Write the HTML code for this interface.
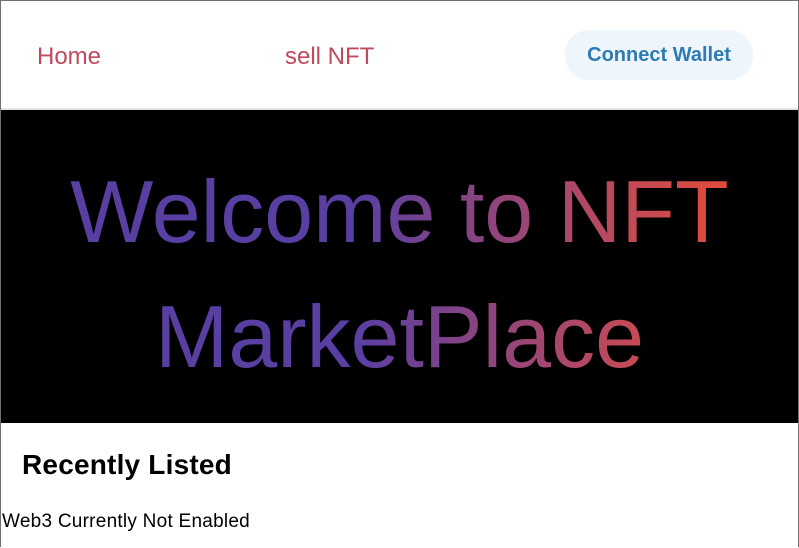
<!DOCTYPE html>
<html><head><meta charset="utf-8"><style>
html,body{margin:0;padding:0;background:#fff;}
body{width:799px;height:548px;position:relative;overflow:hidden;font-family:"Liberation Sans",sans-serif;}
.frame{position:absolute;left:0;top:0;width:797px;height:546px;border:1px solid #707070;border-bottom:none;}
.nav{position:absolute;font-size:24px;color:#c04a5c;top:43px;}
.btn{position:absolute;left:565px;top:30px;width:188px;height:50px;border-radius:24px;background:#eff5fd;color:#2c7bb2;font-weight:bold;font-size:20px;line-height:50px;text-align:center;}
.line{position:absolute;left:1px;top:108px;width:797px;height:2px;background:#e2e2e2;}
.hero{position:absolute;left:1px;top:110px;width:797px;height:313px;background:#000;}
.g{position:absolute;left:0;width:799px;text-align:center;font-size:88px;line-height:100px;
background:linear-gradient(90deg,#5a3fa3 0%,#5a3fa3 45%,#8a4480 60%,#c04a5a 78%,#e34b36 92%);
-webkit-background-clip:text;background-clip:text;color:transparent;}
h2{position:absolute;left:22px;top:447px;margin:0;font-size:28px;font-weight:bold;color:#000;line-height:36px;letter-spacing:0.2px;}
.w{position:absolute;left:2px;top:511px;font-size:19px;letter-spacing:0.25px;color:#000;line-height:22px;}
</style></head><body>
<div class="frame"></div>
<div class="nav" style="left:37px">Home</div>
<div class="nav" style="left:285px">sell NFT</div>
<div class="btn">Connect Wallet</div>
<div class="line"></div>
<div class="hero"></div>
<div class="g" style="top:162px">Welcome to NFT</div>
<div class="g" style="top:287px">MarketPlace</div>
<h2>Recently Listed</h2>
<div class="w">Web3 Currently Not Enabled</div>
</body></html>
